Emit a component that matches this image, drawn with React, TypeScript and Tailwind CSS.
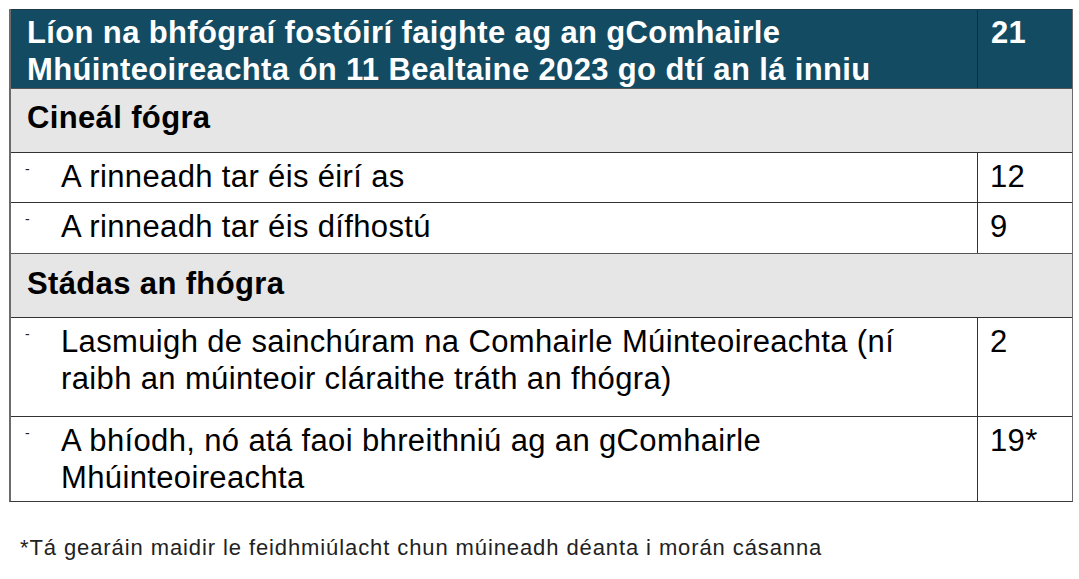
import React from "react";

const font = { fontFamily: '"Liberation Sans", Arial, sans-serif' };

function Bullet() {
  return (
    <span className="absolute left-[14px] top-[9px] text-[14px] leading-none text-[#222] tracking-normal">-</span>
  );
}

export default function App() {
  return (
    <div className="w-[1079px] h-[579px] bg-white text-black" style={font}>
      <div className="pt-[9px] pl-[9px]">
        <div className="w-[1064px] border-l-2 border-r border-[#6b6b6b] border-b border-b-[#3a3a3a] text-[31px] leading-[37px] tracking-[0.36px]">
          {/* header */}
          <div className="flex h-[79px] bg-[#134b63] text-white font-bold border-t border-[#1f3a48]">
            <div className="flex-1 pl-[16px] pt-[4px]">
              Líon na bhfógraí fostóirí faighte ag an gComhairle
              <br />
              Mhúinteoireachta ón 11 Bealtaine 2023 go dtí an lá inniu
            </div>
            <div className="w-[95px] border-l border-[#1b2a33] pl-[13px] pt-[4px]">21</div>
          </div>
          {/* section 1 */}
          <div className="h-[65px] bg-[#e6e6e6] border-t border-[#555] border-b border-b-[#333] font-bold pl-[16px] pt-[10px]">
            Cineál fógra
          </div>
          <div className="flex h-[50px] border-b border-[#333]">
            <div className="relative flex-1 pl-[50px] pt-[5px]">
              <Bullet />A rinneadh tar éis éirí as
            </div>
            <div className="w-[95px] border-l border-[#333] pl-[12px] pt-[5px]">12</div>
          </div>
          <div className="flex h-[50px]">
            <div className="relative flex-1 pl-[50px] pt-[5px]">
              <Bullet />A rinneadh tar éis dífhostú
            </div>
            <div className="w-[95px] border-l border-[#333] pl-[12px] pt-[5px]">9</div>
          </div>
          {/* section 2 */}
          <div className="h-[65px] bg-[#e6e6e6] border-t border-[#555] border-b border-b-[#333] font-bold pl-[16px] pt-[11px]">
            Stádas an fhógra
          </div>
          <div className="flex h-[99px] border-b border-[#333]">
            <div className="relative flex-1 pl-[50px] pt-[5px]">
              <Bullet />
              Lasmuigh de sainchúram na Comhairle Múinteoireachta (ní
              <br />
              raibh an múinteoir cláraithe tráth an fhógra)
            </div>
            <div className="w-[95px] border-l border-[#333] pl-[12px] pt-[5px]">2</div>
          </div>
          <div className="flex h-[84px]">
            <div className="relative flex-1 pl-[50px] pt-[5px]">
              <Bullet />
              A bhíodh, nó atá faoi bhreithniú ag an gComhairle
              <br />
              Mhúinteoireachta
            </div>
            <div className="w-[95px] border-l border-[#333] pl-[12px] pt-[5px]">19*</div>
          </div>
        </div>
        <div className="pl-[11px] pt-[33px] text-[22px] leading-[26px] tracking-[0.9px] text-[#222]">
          *Tá gearáin maidir le feidhmiúlacht chun múineadh déanta i morán cásanna
        </div>
      </div>
    </div>
  );
}
